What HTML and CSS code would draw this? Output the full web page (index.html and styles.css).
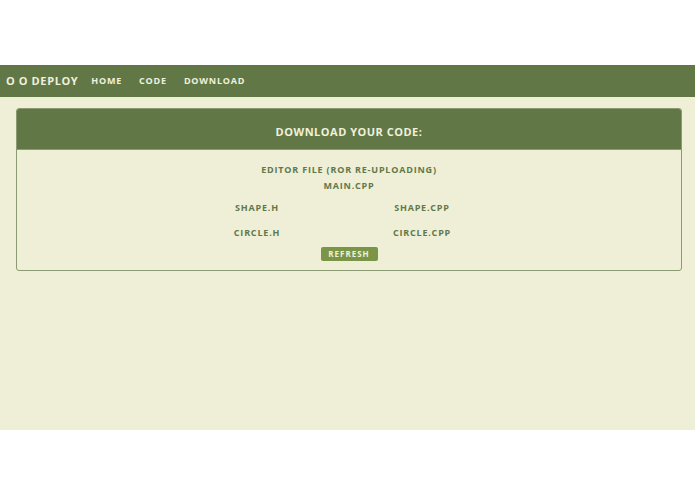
FILE: index.html
```html
<!DOCTYPE html>
<html>
<head>
<meta charset="utf-8">
<link rel="stylesheet" href="styles.css">
</head>
<body>
<div class="top"></div>
<nav class="nav">
  <span class="brand">O O DEPLOY</span>
  <a class="link">HOME</a>
  <a class="link">CODE</a>
  <a class="link">DOWNLOAD</a>
</nav>
<main class="main">
  <section class="panel">
    <div class="panel-head">DOWNLOAD YOUR CODE:</div>
    <div class="panel-body">
      <div class="line">EDITOR FILE (ROR RE-UPLOADING)</div>
      <div class="line main-file">MAIN.CPP</div>
      <div class="files">
        <div class="file">SHAPE.H</div>
        <div class="file">SHAPE.CPP</div>
        <div class="file">CIRCLE.H</div>
        <div class="file">CIRCLE.CPP</div>
      </div>
      <button class="btn">REFRESH</button>
    </div>
  </section>
</main>
</body>
</html>
```
FILE: styles.css
```css
html, body { margin: 0; padding: 0; background: #fff; }
body { font-family: "Open Sans", sans-serif; font-weight: bold; }
.top { height: 65px; }
.nav {
  height: 32px; background: #617846; display: flex; align-items: center;
  padding-left: 6px; padding-bottom: 2px; box-sizing: border-box;
}
.brand { color: #f0f0dc; font-size: 11px; letter-spacing: 0.6px; margin-right: 13px; }
.link { color: #f0f0dc; font-size: 9px; letter-spacing: 0.8px; margin-right: 17px; }
.main { background: #efefd7; height: 333px; padding-top: 11px; box-sizing: border-box; }
.panel {
  margin: 0 13px 0 16px; border: 1px solid #8c9a73; border-radius: 3px; overflow: hidden;
}
.panel-head {
  background: #617846; color: #f0f0dc; height: 41px; display: flex; align-items: center;
  justify-content: center; font-size: 11px; letter-spacing: 0.5px; padding-top: 4px;
  box-sizing: border-box; border-bottom: 1px solid #8c9a73;
}
.panel-body {
  display: flex; flex-direction: column; align-items: center; padding: 12px 0 9px;
  color: #61784a; font-size: 9px; letter-spacing: 0.8px;
}
.line { height: 16px; line-height: 16px; }
.files {
  display: grid; grid-template-columns: 165px 165px; padding-right: 19px;
  margin-top: 6px; row-gap: 9px; text-align: center;
}
.file { height: 16px; line-height: 16px; }
.btn {
  margin-top: 6px; background: #7a9448; color: #eef0dc; border: none; border-radius: 2px;
  font-family: "Open Sans", sans-serif; font-weight: bold; font-size: 8px; letter-spacing: 1px;
  width: 57px; height: 14px; padding: 0; line-height: 14px;
}
```
